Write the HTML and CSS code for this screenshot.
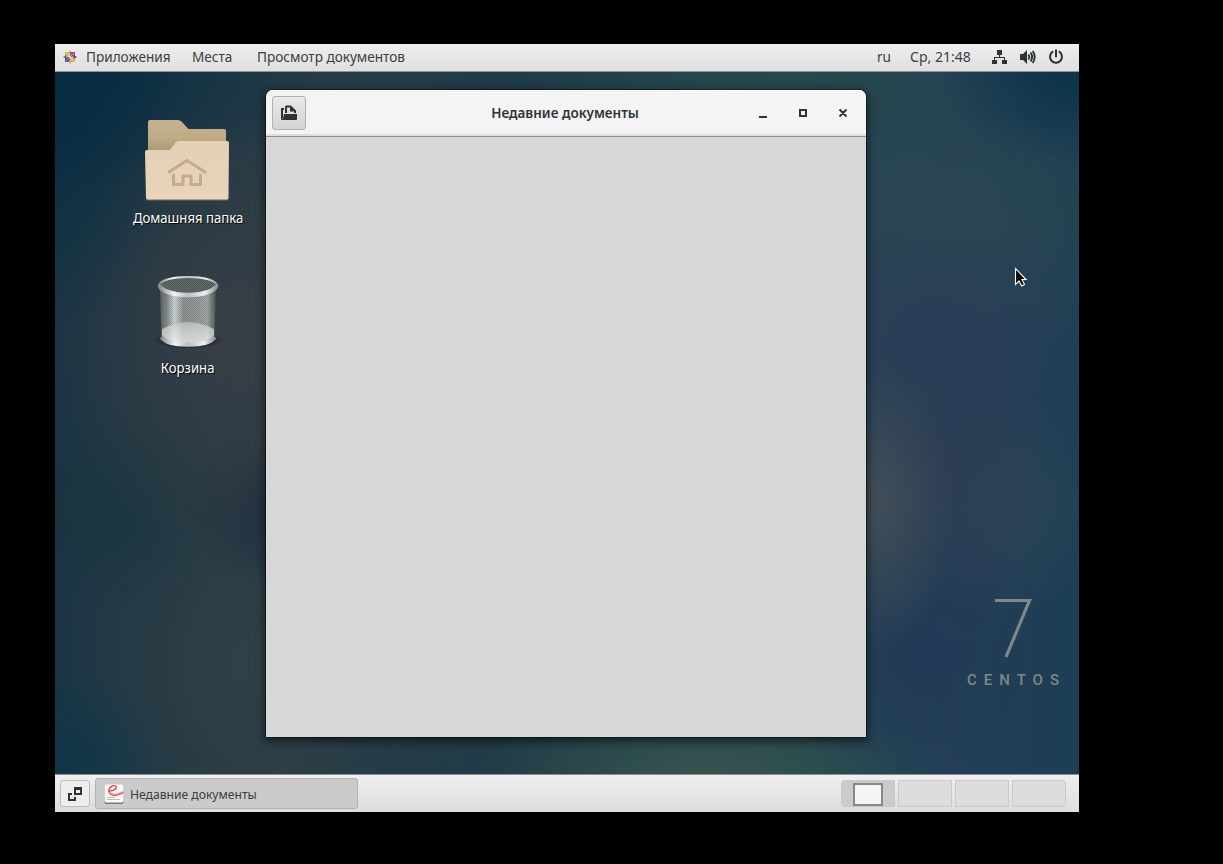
FILE: index.html
```html
<!DOCTYPE html>
<html lang="ru">
<head>
<meta charset="utf-8">
<title>Недавние документы</title>
<link rel="stylesheet" href="styles.css">
</head>
<body>
<main class="screen">
  <header class="top-panel">
    <svg class="distro" width="14" height="14" viewBox="0 0 14 14">
      <path fill="#f2b35a" d="M5 3 7 0l2 3v3H5z"/><path fill="#a3d14e" d="M2 2h5v5H2z"/><path fill="#a83f95" d="M7 2h5v5H7z"/><path fill="#4a4a96" d="M2 7h5v5H2z"/><path fill="#f3ae45" d="M7 7h5v5H7z"/>
      <path fill="#a83f95" d="M0 7l3.500-2v4z"/><path fill="#4a3f86" d="M14 7l-3.500-2v4z"/><path fill="#92c650" d="M7 14l-2-3h4z"/>
      <path stroke="#eee" stroke-width=".5" d="M7 3v8M3 7h8M3 3l8 8M11 3l-8 8"/>
    </svg>
    <span class="label apps">Приложения</span>
    <span class="label places">Места</span>
    <span class="label viewer">Просмотр документов</span>
    <span class="label lang">ru</span>
    <span class="label clock">Ср, 21:48</span>
    <svg class="net" width="16" height="16" viewBox="0 0 16 16" fill="#2e3436"><path d="M5 1h5v5H8v2h5v3h2v4h-5v-4h2V9H3v2h2v4H0v-4h2V8h5V6H5z"/></svg>
    <svg class="volume" width="16" height="16" viewBox="0 0 16 16"><path fill="#2e3436" d="M0 5h3l4-4v14l-4-4H0z"/><path fill="none" stroke="#2e3436" stroke-width="1.900" d="M8.300 5.500q2 2.500 0 5M10.500 3.500q3.200 4.500 0 9M12.700 2q4 6 0 12"/></svg>
    <svg class="power" width="16" height="16" viewBox="0 0 16 16" fill="none" stroke="#2e3436" stroke-width="2" stroke-linecap="round"><path d="M4.500 2.900a6 6 0 1 0 7 0M8 1.200v6.300"/></svg>
  </header>

  <section class="desktop">
    <div class="icons">
      <div class="shortcut">
        <svg width="86" height="82" viewBox="0 0 86 82">
          <defs><linearGradient id="fb" x1="0" y1="0" x2="0" y2="1"><stop offset="0" stop-color="#c4b28e"/><stop offset=".35" stop-color="#bfac87"/><stop offset=".65" stop-color="#a89672"/></linearGradient>
          <linearGradient id="ff" x1="0" y1="0" x2="0" y2="1"><stop offset="0" stop-color="#e3d0b5"/><stop offset="1" stop-color="#e8d4ba"/></linearGradient></defs>
          <path fill="url(#fb)" d="M4 3q0-2 2-2h28q2 0 3.500 1.500l7 7.500H80q2 0 2 2v40H4z"/>
          <path fill="#8f7b5b" opacity=".8" d="M2 78h82.500v1.500q0 2-2 2H4q-2 0-2-2z"/>
          <path fill="url(#ff)" d="M1 33q0-2 2-2h23l5.500-7.500Q33 22 35 22h48q2 0 2 2l-.5 54.500q0 2-2 2H4q-2 0-2-2z"/>
          <path fill="none" stroke="#c4ab8a" stroke-width="3" stroke-linecap="round" stroke-linejoin="round" d="m25 53 18-11.500L61 53M29.500 56v9.500H39V57h8v8.500h9.500V56"/>
        </svg>
        <span class="caption home">Домашняя папка</span>
      </div>
      <div class="shortcut">
        <svg width="70" height="78" viewBox="0 0 70 78">
          <defs>
            <linearGradient id="tb"><stop offset="0" stop-color="#56645f"/><stop offset=".1" stop-color="#87918e"/><stop offset=".26" stop-color="#f6f8f7"/><stop offset=".42" stop-color="#a1a8a5"/><stop offset=".6" stop-color="#a8adab"/><stop offset=".85" stop-color="#b9bebc"/><stop offset="1" stop-color="#454f4d"/></linearGradient>
            <linearGradient id="tr"><stop offset="0" stop-color="#8b8f8e"/><stop offset=".25" stop-color="#f3f3f3"/><stop offset=".5" stop-color="#bcbfbe"/><stop offset=".8" stop-color="#f0f0f0"/><stop offset="1" stop-color="#939796"/></linearGradient>
            <linearGradient id="tf" x1="0" y1="0" x2="0" y2="1"><stop offset="0" stop-color="#c5cbc8"/><stop offset="1" stop-color="#f2f4f3"/></linearGradient>
            <pattern id="mesh" width="2" height="2" patternUnits="userSpaceOnUse"><path fill="#242b2a" d="M0 0h1v1H0zM1 1h1v1H1z"/></pattern>
            <radialGradient id="sh"><stop offset=".6" stop-color="#000" stop-opacity=".4"/><stop offset="1" stop-color="#000" stop-opacity="0"/></radialGradient>
          </defs>
          <ellipse cx="35" cy="67" rx="35" ry="9" fill="url(#sh)"/>
          <path fill="url(#tb)" opacity=".85" d="M7 17h56l-1.500 47q-26.500 14-53 0z"/>
          <path fill="url(#mesh)" opacity=".22" d="M12 17h48l-1.500 38q-23-8-46 0z"/>
          <path fill="url(#tf)" opacity=".7" d="M9 56q26-14 52 0v8q-26 12-52 0z"/>
          <path fill="none" stroke="url(#tr)" stroke-width="4.500" d="M8.500 64q5 7.500 26.500 7.500T61.500 64"/>
          <ellipse cx="35" cy="13" rx="28.500" ry="9" fill="#626d6c"/><ellipse cx="35" cy="13" rx="28.500" ry="9" fill="url(#mesh)" opacity=".35"/>
          <path fill="none" stroke="url(#tr)" stroke-width="2" d="M6 13C6 1 64 1 64 13"/>
          <path fill="none" stroke="url(#tr)" stroke-width="4.500" d="M7 12.500C7 17 18 22 35 22S63 17 63 12.500"/>
        </svg>
        <span class="caption trash">Корзина</span>
      </div>
    </div>

    <article class="window">
      <header class="titlebar">
        <button class="open" aria-label="Открыть"><svg width="16" height="16" viewBox="0 0 16 16"><path fill="#2e3436" d="M0 3h3v2H2v8l-2 1zM4 8V2q0-1.500 1.500-1.500H10L15 5.500V8h-2V6.500H9V2.500H6V8zM3 9h13v5q0 1-1 1H1q-1 0-1-1l2-.5z"/></svg></button>
        <span class="title"><b>Недавние документы</b></span>
        <svg class="controls" width="94" height="12" viewBox="0 0 94 12" fill="none" stroke="#2e3436" stroke-width="2"><path d="M1 10h8M42 3h6v6h-6zM81.500 2.500l7 7M88.500 2.500l-7 7"/></svg>
      </header>
      <div class="content"></div>
    </article>

    <svg class="brand" width="94" height="90" viewBox="0 0 94 90">
      <path fill="none" stroke="#7e8886" stroke-width="3.200" d="M28 2.500h34.500L39 59"/>
      <text x="0" y="87" textLength="92" class="brand-text">CENTOS</text>
    </svg>
    <svg class="cursor" width="15" height="22" viewBox="0 0 15 22"><path fill="#080808" stroke="#fff" stroke-width="1.100" d="M1.500 1.500v16l3.500-3.500 2.700 5 2.800-1.500L8 12.500h4z"/></svg>
  </section>

  <footer class="bottom-panel">
    <button class="show" aria-label="Показать рабочий стол"><svg width="16" height="16" viewBox="0 0 16 16" fill="none" stroke="#2e3436" stroke-width="2"><path d="M8 2h6v6H8zM5 8H2v6h6v-3"/><path stroke-width="1" d="M8 3.500h6"/></svg></button>
    <button class="task">
      <svg width="20" height="20" viewBox="0 0 20 20"><rect x=".5" y="1" width="19" height="19" rx="2" fill="#777"/><rect x=".5" y=".5" width="19" height="18" rx="2" fill="#fafafa"/><path fill="none" stroke="#e33b3b" stroke-width="1.300" d="M5 7c5 0 9-3 6.500-5C8 .5 3 5 5.500 9s9 2.500 14-.5"/><path fill="none" stroke="#f08a8a" stroke-width="1.500" d="M5 8q4 5 14 0"/><path stroke="#bbb" d="M3 13.500h8M3 15.500h13"/></svg>
      <span class="label task-name">Недавние документы</span>
    </button>
    <div class="spaces"><i class="space active"><i class="mini"></i></i><i class="space"></i><i class="space"></i><i class="space"></i></div>
  </footer>
</main>
</body>
</html>
```

FILE: styles.css
```css
* { box-sizing: border-box; }
body { margin: 0; padding: 44px 0 0 55px; height: 864px; background: #000; overflow: hidden; font-family: "Noto Sans", "Open Sans", sans-serif; color: #2e3436; }
svg { display: block; flex: none; }
button { font: inherit; color: inherit; padding: 0; }
.screen { width: 1024px; height: 768px; display: flex; flex-direction: column; overflow: hidden; }

.top-panel { height: 28px; flex: none; display: flex; align-items: center; padding: 0 0 1px 8px; background: linear-gradient(#eeeeee, #dfdfdf); border-bottom: 1px solid #8e938f; }
.label { display: block; flex: none; font-size: 15px; line-height: 20px; white-space: nowrap; transform-origin: 0 50%; color: #3a4042; }
.apps { width: 84px; margin-left: 9px; }
.places { width: 41px; margin-left: 22px; }
.viewer { width: 148px; margin-left: 24px; }
.lang { width: 13px; margin-left: auto; }
.clock { width: 61px; margin: 0 21px 0 20px; }
.top-panel .label { padding-bottom: 2px; line-height: 18px; transform: scaleX(.905); }
.top-panel .clock { transform: scaleX(.935); }
.volume { margin-left: 12px; }
.power { margin: 0 15px 0 12px; }

.desktop { height: 702px; flex: none; position: relative; padding-top: 18px; display: flex; background:
  radial-gradient(ellipse 130px 260px at 0 0, #072c42, transparent),
  radial-gradient(ellipse 280px 120px at 0 0, #0a2d43, transparent),
  radial-gradient(ellipse 140px 90px at 1024px 0, #0b3248, transparent),
  radial-gradient(ellipse 110px 110px at 0 702px, #10364a, transparent),
  radial-gradient(ellipse 190px 230px at 185px 265px, #393e45, transparent),
  radial-gradient(ellipse 100px 80px at 225px 435px, #1a2c3c, transparent),
  radial-gradient(ellipse 120px 100px at 50px 435px, #1a363f, transparent),
  radial-gradient(ellipse 190px 240px at 190px 590px, #334148cc, transparent),
  radial-gradient(ellipse 80px 150px at 820px 430px, #414e57, transparent),
  radial-gradient(ellipse 130px 140px at 865px 580px, #223b57, transparent),
  radial-gradient(ellipse 100px 200px at 890px 390px, #2c3b54cc, transparent),
  radial-gradient(ellipse 120px 110px at 950px 430px, #324757aa, transparent),
  radial-gradient(ellipse 200px 160px at 875px 260px, #2a3f58, transparent),
  radial-gradient(ellipse 230px 150px at 890px 150px, #2b484f, transparent),
  radial-gradient(ellipse 230px 80px at 650px 702px, #36544f, transparent),
  radial-gradient(ellipse 240px 110px at 740px 0, #26474b, transparent),
  linear-gradient(90deg, #1b3543, #273c46 22%, #1f3b47 45%, #23464c 70%, #243f57 88%, #1d3e54); }
.icons { width: 211px; flex: none; padding: 29px 0 0 55px; }
.shortcut { width: 156px; height: 150px; display: flex; flex-direction: column; align-items: center; }
.shortcut svg { height: 82px; }
.shortcut:first-child svg { margin-right: 2px; }
.shortcut + .shortcut svg { margin-top: 2px; }
.caption { color: #fff; font-size: 15px; line-height: 20px; margin-top: 6px; white-space: nowrap; transform: scaleX(.875); text-shadow: 1px 1px 1px #000; }
.trash { margin-top: 4px; }

.window { width: 600px; height: 647px; border-radius: 7px 7px 0 0; background: #d6d6d4; box-shadow: 0 0 0 1px rgba(0,0,0,.35), 0 3px 9px 2px rgba(0,0,0,.5); overflow: hidden; display: flex; flex-direction: column; }
.titlebar { height: 47px; flex: none; display: grid; grid-template-columns: 40px 1fr 108px; align-items: center; padding-left: 6px; background: #f4f4f4; border-bottom: 1px solid #8f918c; box-shadow: inset 0 1px #fff, inset 0 -2px #dededb; }
.open { width: 34px; height: 34px; display: grid; place-items: center; border: 1px solid #b0b0ad; border-radius: 3px; background: linear-gradient(#e9e9e8, #d4d4d2); }
.title { font-size: 15px; text-align: center; padding: 0 0 2px 61px; line-height: 20px; }
.title b { display: inline-block; font-weight: 600; transform: scaleX(.9); white-space: nowrap; }
.content { flex: 1; background: #d7d7d5; }

.brand { position: absolute; left: 912px; top: 526px; }
.brand-text { font: 500 15px Roboto, sans-serif; fill: #7c8888; }
.cursor { position: absolute; left: 959px; top: 195px; }

.bottom-panel { height: 38px; flex: none; display: flex; align-items: center; padding: 0 13px 0 5px; background: linear-gradient(#efefef, #dddddd); border-top: 1px solid #8e8e8d; }
.show { width: 30px; height: 27px; display: grid; place-items: center; border: 1px solid #bdbdbd; border-radius: 3px; background: #eeeeee; }
.task { width: 263px; height: 31px; margin-left: 5px; display: flex; align-items: center; gap: 6px; padding-left: 8px; border: 1px solid #b3b3b3; border-radius: 3px; background: #cbcbcb; }
.task-name { font-size: 13.330px; transform: scaleX(.91); }
.spaces { margin-left: auto; display: flex; gap: 3px; }
.space { width: 54px; height: 27px; border: 1px solid #cacaca; background: #dddddd; display: grid; place-items: center; }
.space:last-child { border-radius: 0 4px 4px 0; }
.active { background: #cbcbcb; border-radius: 4px 0 0 4px; }
.mini { width: 30px; height: 23px; border: 2px solid #888; background: #f5f5f4; position: relative; top: 1px; }
```
